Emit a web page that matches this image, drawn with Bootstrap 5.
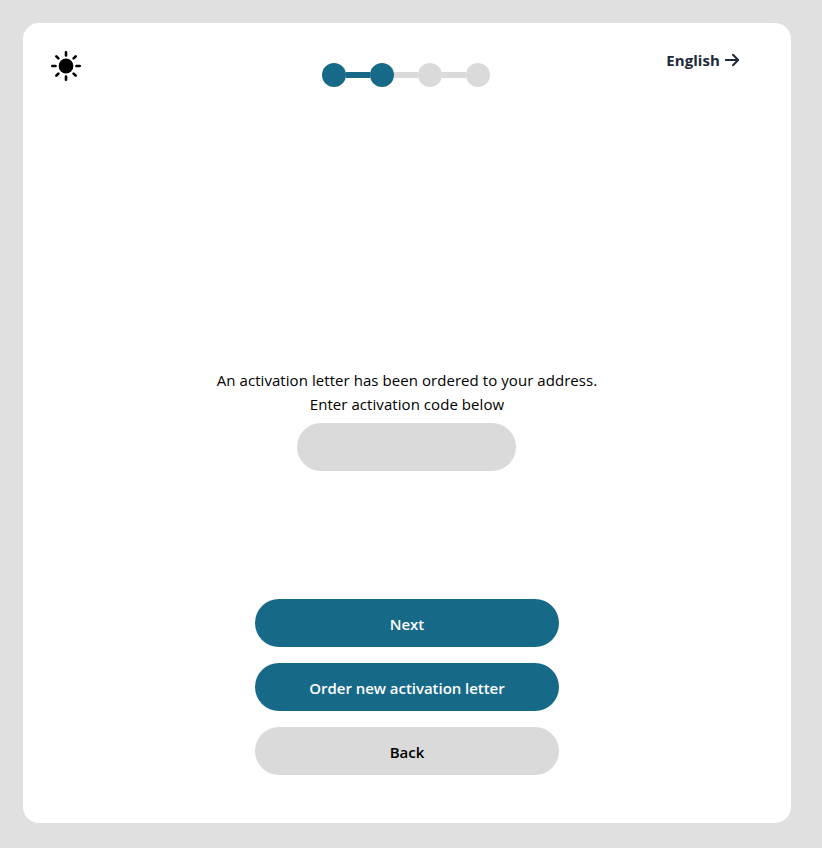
<!DOCTYPE html>
<html lang="en">
<head>
<meta charset="utf-8">
<meta name="viewport" content="width=device-width, initial-scale=1">
<title>Activation letter</title>
<link href="https://cdn.jsdelivr.net/npm/bootstrap@5.3.0/dist/css/bootstrap.min.css" rel="stylesheet">
<style>
  body { background: #e0e0e0; font-family: "Segoe UI", "Open Sans", "Noto Sans", sans-serif; font-size: 15px; line-height: 24px; color: #000; padding: 23px 0 0 23px; }
  .panel { width: 768px; height: 800px; border-radius: 16px; }
  .topbar { height: 345px; padding: 28px 51px 0 28px; }
  .steps { margin: 12px 0 0 65px; }
  .dot { width: 24px; height: 24px; background: #dadada; }
  .bar { width: 24px; height: 6px; background: #dadada; }
  .done { background: #176988; }
  .lang { color: #1e293b; letter-spacing: .08px; margin-top: -3px; gap: 4px; }
  .intro { letter-spacing: .06px; }
  .code-input, .code-input:focus { width: 219px; height: 48px; margin: 7px 1px 0 0; background: #dadada; border: 0; box-shadow: none; }
  .actions { width: 304px; margin-top: 128px; }
  .actions .btn { height: 48px; padding: 2px 0 0; border: 0; font-size: 15px; line-height: 24px; letter-spacing: -.04px; --bs-btn-bg: #176988; --bs-btn-hover-bg: #125873; --bs-btn-color: #fff; --bs-btn-hover-color: #fff; }
  .actions .btn-back { --bs-btn-bg: #dadada; --bs-btn-hover-bg: #cacaca; --bs-btn-color: #000; --bs-btn-hover-color: #000; }
</style>
</head>
<body>
<main class="panel bg-white d-flex flex-column align-items-center">
  <header class="topbar w-100 d-flex align-items-start justify-content-between">
    <svg width="30" height="30" viewBox="0 0 30 30" role="img" aria-label="Light theme">
      <circle cx="15" cy="15" r="7.4"/>
      <path d="M15 1.3v3.2M15 25.5v3.2M1.3 15h3.2M25.5 15h3.2M5.3 5.3l2.1 2.1M22.6 22.6l2.1 2.1M24.7 5.3l-2.1 2.1M7.4 22.6l-2.1 2.1" fill="none" stroke="#000" stroke-width="2.6" stroke-linecap="round"/>
    </svg>
    <div class="steps d-flex align-items-center">
      <span class="dot rounded-circle done"></span><span class="bar done"></span>
      <span class="dot rounded-circle done"></span><span class="bar"></span>
      <span class="dot rounded-circle"></span><span class="bar"></span>
      <span class="dot rounded-circle"></span>
    </div>
    <a class="lang d-flex align-items-center fw-bold text-decoration-none" href="#"><span>English</span>
      <svg width="16" height="16" viewBox="0 0 16 16" fill="none" stroke="currentColor" stroke-width="2" stroke-linecap="round" stroke-linejoin="round"><path d="M1.8 8h12.4M9 2.8 14.2 8 9 13.2"/></svg>
    </a>
  </header>
  <label class="intro text-center" for="code">An activation letter has been ordered to your address.<br>Enter activation code below</label>
  <input id="code" class="code-input form-control rounded-pill text-center" type="text">
  <div class="actions d-grid gap-3">
    <button class="btn rounded-pill fw-semibold" type="button">Next</button>
    <button class="btn rounded-pill fw-semibold" type="button">Order new activation letter</button>
    <button class="btn btn-back rounded-pill fw-semibold" type="button">Back</button>
  </div>
</main>
<script src="https://cdn.jsdelivr.net/npm/bootstrap@5.3.0/dist/js/bootstrap.bundle.min.js"></script>
</body>
</html>
